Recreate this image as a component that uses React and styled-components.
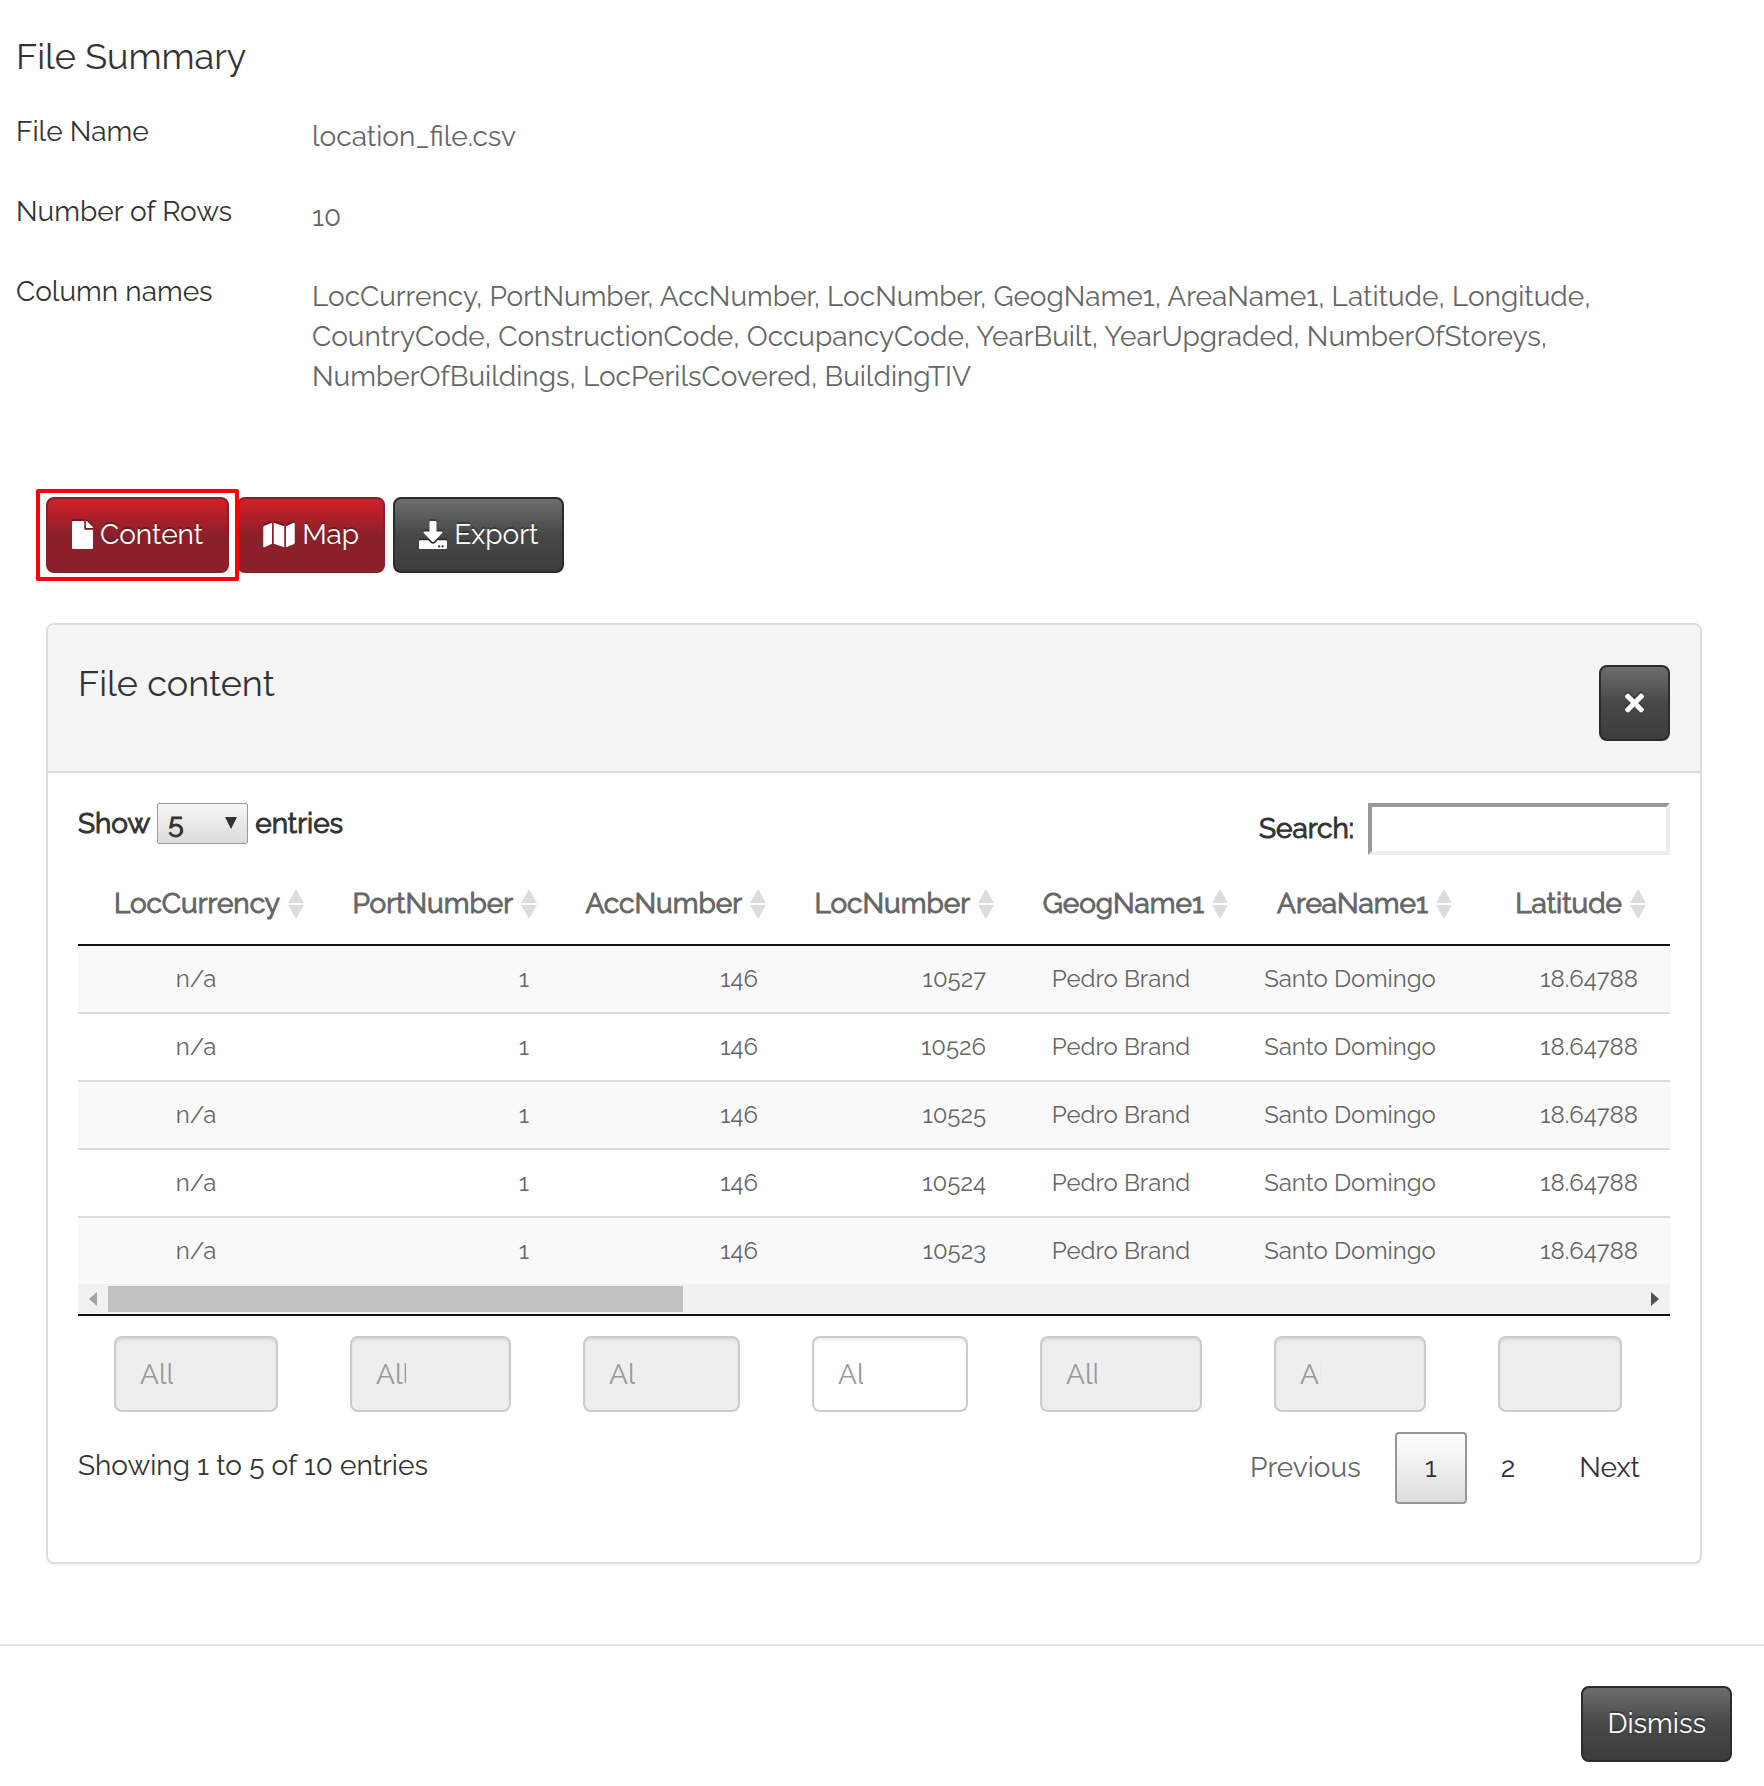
import React from "react";
import styled, { createGlobalStyle, css } from "styled-components";
import { FaDownload, FaFile, FaMap, FaTimes } from "react-icons/fa";

const GlobalStyle = createGlobalStyle`
  *, *::before, *::after { box-sizing: border-box; }
  body {
    margin: 0;
    background: #fff;
    color: #333;
    font-family: Raleway, "Open Sans", sans-serif;
    font-size: 28px;
    line-height: 40px;
  }
  button, input, select { font: inherit; color: inherit; margin: 0; }
`;

const emphasis = css`
  font-weight: 400;
  -webkit-text-stroke: 1px currentColor;
`;

const Summary = styled.section`
  display: flex;
  flex-direction: column;
  gap: 38px;
  padding: 38px 16px 0;
`;

const Heading = styled.h2`
  margin: 0;
  font-size: 36px;
  line-height: 36px;
  font-weight: 400;
`;

const Facts = styled.dl`
  display: grid;
  grid-template-columns: 296px 1fr;
  row-gap: 35px;
  margin: 0;
`;

const FactName = styled.dt``;

const FactValue = styled.dd`
  margin: 0;
  padding-top: 5px;
  color: #666;
`;

const Actions = styled.div`
  display: flex;
  gap: 8px;
  padding: 100px 46px 50px;
`;

const Highlight = styled.div`
  position: relative;
  z-index: 1;

  &::after {
    content: "";
    position: absolute;
    inset: -8px -10px;
    border: 4px solid #f00;
    border-radius: 2px;
    pointer-events: none;
  }
`;

const Button = styled.button`
  display: inline-flex;
  align-items: center;
  justify-content: center;
  gap: 7px;
  height: 76px;
  padding: 0 24px;
  border: 2px solid ${(p) => (p.$primary ? "#892029" : "#2b2c2b")};
  border-radius: 8px;
  background: ${(p) =>
    p.$primary
      ? "linear-gradient(#d5202a, #8a2029 50%, #8a2029)"
      : "linear-gradient(#6d7071, #474948 50%, #3b3c3b)"};
  background-origin: border-box;
  color: #fff;
  text-shadow: 0 -2px 0 rgba(0, 0, 0, 0.3);
  cursor: pointer;

  svg {
    display: block;
    height: 28px;
    width: ${(p) => p.$iconWidth}px;
    filter: drop-shadow(0 -2px 0 rgba(0, 0, 0, 0.3));
  }
`;

const Panel = styled.section`
  margin: 0 62px 80px 46px;
  border: 2px solid #ddd;
  border-radius: 8px;
  box-shadow: 0 2px 2px rgba(0, 0, 0, 0.05);
`;

const PanelHeader = styled.header`
  display: flex;
  justify-content: space-between;
  align-items: flex-start;
  padding: 40px 30px 30px;
  border-bottom: 2px solid #ddd;
  border-radius: 6px 6px 0 0;
  background: #f5f5f5;
`;

const PanelBody = styled.div`
  padding: 30px 30px 58px;
`;

const Toolbar = styled.div`
  display: flex;
  justify-content: space-between;
  align-items: flex-start;
  margin-bottom: 9px;
`;

const LengthLabel = styled.label`
  ${emphasis}
  display: flex;
  align-items: center;
  gap: 7px;
`;

const SelectBox = styled.span`
  position: relative;
  display: flex;

  svg {
    position: absolute;
    right: 11px;
    top: 14px;
    pointer-events: none;
  }
`;

const Select = styled.select`
  appearance: none;
  width: 91px;
  height: 41px;
  padding: 0 10px;
  border: 1px solid #999;
  border-radius: 2px;
  background: linear-gradient(#f6f6f6, #dcdcdc);
  line-height: 36px;
`;

const SearchLabel = styled.label`
  ${emphasis}
  display: flex;
  align-items: center;
  gap: 14px;
  line-height: 36px;
`;

const SearchInput = styled.input`
  width: 302px;
  height: 52px;
  padding: 2px 4px;
  border: 4px solid;
  border-color: #999 #eee #eee #999;
  background: #fff;
  outline: none;
`;

const DataTable = styled.table`
  width: 100%;
  table-layout: fixed;
  border-collapse: separate;
  border-spacing: 0;
  color: #666;
`;

const HeadCell = styled.th`
  ${emphasis}
  padding: 20px 10px 20px 0;
  border-bottom: 2px solid #111;
  white-space: nowrap;

  &:last-child { padding-right: 24px; }
`;

const SortLabel = styled.span`
  display: flex;
  justify-content: flex-end;
  align-items: center;
  gap: 8px;
`;

const Row = styled.tr`
  background: ${(p) => (p.$striped ? "#f9f9f9" : "#fff")};

  &:not(:first-child) td { border-top: 2px solid #ddd; }
`;

const Cell = styled.td`
  padding: 16px 18px;
  font-size: 24px;
  line-height: 34px;
  text-align: ${(p) => (p.$numeric ? "right" : "center")};
  white-space: nowrap;

  &:last-child { padding-right: 32px; }
`;

const ScrollBar = styled.div`
  display: flex;
  height: 32px;
  background: #f1f1f1;
  border-bottom: 2px solid #111;
`;

const ScrollArrow = styled.button`
  display: flex;
  align-items: center;
  justify-content: center;
  flex: 0 0 30px;
  padding: 0;
  border: 0;
  background: none;
  color: ${(p) => (p.disabled ? "#a3a3a3" : "#505050")};
`;

const ScrollTrack = styled.div`
  flex: 1;
  padding: 2px 0;
`;

const ScrollThumb = styled.div`
  width: ${(p) => p.$share}%;
  height: 100%;
  background: #c1c1c1;
`;

const Filters = styled.div`
  display: grid;
  grid-template-columns: 236fr 233fr 229fr 228fr 234fr 224fr 208fr;
  padding: 20px 0;
`;

const FilterCell = styled.div`
  padding: 0 36px;

  &:last-child { padding-right: 48px; }
`;

const FilterInput = styled.input`
  display: block;
  width: 100%;
  height: 76px;
  padding: 0 min(103px, 100% - 28px) 0 24px;
  border: 2px solid #ccc;
  border-radius: 8px;
  background: #fff;
  box-shadow: inset 0 2px 2px rgba(0, 0, 0, 0.075);

  &::placeholder { color: #999; opacity: 1; }
  &:disabled { background: #eee; }
`;

const TableFooter = styled.div`
  display: flex;
  justify-content: space-between;
  align-items: flex-start;
`;

const Info = styled.div`
  padding-top: 14px;
`;

const Pager = styled.nav`
  display: flex;
  gap: 4px;
`;

const PageButton = styled.button`
  height: 72px;
  padding: 0 28px;
  border: 2px solid ${(p) => (p.$current ? "#979797" : "transparent")};
  border-radius: 4px;
  background: ${(p) => (p.$current ? "linear-gradient(#fff, #dcdcdc)" : "none")};
  color: #333;

  &:disabled { color: #666; }
`;

const Footer = styled.footer`
  display: flex;
  justify-content: flex-end;
  padding: 40px 32px 24px;
  border-top: 2px solid #e5e5e5;
`;

const columns = [
  { name: "LocCurrency", width: 236 },
  { name: "PortNumber", width: 233, numeric: true },
  { name: "AccNumber", width: 229, numeric: true },
  { name: "LocNumber", width: 228, numeric: true, filterable: true },
  { name: "GeogName1", width: 234 },
  { name: "AreaName1", width: 224 },
  { name: "Latitude", width: 208, numeric: true },
];

const rows = [10527, 10526, 10525, 10524, 10523].map((loc) => [
  "n/a", "1", "146", String(loc), "Pedro Brand", "Santo Domingo", "18.64788",
]);

const SortIcon = () => (
  <svg width="16" height="30" viewBox="0 0 16 30" fill="#dcdcdc" aria-hidden="true">
    <path d="M8 0 16 14H0ZM0 16H16L8 30Z" />
  </svg>
);

const SelectArrow = () => (
  <svg width="12" height="12" viewBox="0 0 12 12" fill="#333" aria-hidden="true">
    <path d="M0 0H12L6 12Z" />
  </svg>
);

const Triangle = ({ left }) => (
  <svg width="8" height="14" viewBox="0 0 8 14" fill="currentColor" aria-hidden="true">
    <path d={left ? "M8 0V14L0 7Z" : "M0 0V14L8 7Z"} />
  </svg>
);

export default function App() {
  return (
    <>
      <GlobalStyle />
      <main>
        <Summary>
          <Heading>File Summary</Heading>
          <Facts>
            <FactName>File Name</FactName>
            <FactValue>location_file.csv</FactValue>
            <FactName>Number of Rows</FactName>
            <FactValue>10</FactValue>
            <FactName>Column names</FactName>
            <FactValue>
              LocCurrency, PortNumber, AccNumber, LocNumber, GeogName1, AreaName1, Latitude,
              Longitude, CountryCode, ConstructionCode, OccupancyCode, YearBuilt, YearUpgraded,
              NumberOfStoreys, NumberOfBuildings, LocPerilsCovered, BuildingTIV
            </FactValue>
          </Facts>
        </Summary>

        <Actions>
          <Highlight>
            <Button type="button" $primary $iconWidth={21}><FaFile />Content</Button>
          </Highlight>
          <Button type="button" $primary $iconWidth={32}><FaMap />Map</Button>
          <Button type="button" $iconWidth={28}><FaDownload />Export</Button>
        </Actions>

        <Panel>
          <PanelHeader>
            <Heading>File content</Heading>
            <Button type="button" aria-label="Close" $iconWidth={19}><FaTimes /></Button>
          </PanelHeader>
          <PanelBody>
            <Toolbar>
              <LengthLabel>
                Show
                <SelectBox>
                  <Select defaultValue="5">
                    <option>5</option>
                    <option>10</option>
                  </Select>
                  <SelectArrow />
                </SelectBox>
                entries
              </LengthLabel>
              <SearchLabel>
                Search:
                <SearchInput type="search" />
              </SearchLabel>
            </Toolbar>

            <DataTable>
              <colgroup>
                {columns.map((c) => <col key={c.name} width={c.width} />)}
              </colgroup>
              <thead>
                <tr>
                  {columns.map((c) => (
                    <HeadCell key={c.name} scope="col">
                      <SortLabel>{c.name}<SortIcon /></SortLabel>
                    </HeadCell>
                  ))}
                </tr>
              </thead>
              <tbody>
                {rows.map((row, i) => (
                  <Row key={row[3]} $striped={i % 2 === 0}>
                    {row.map((value, j) => (
                      <Cell key={columns[j].name} $numeric={columns[j].numeric}>{value}</Cell>
                    ))}
                  </Row>
                ))}
              </tbody>
            </DataTable>

            <ScrollBar>
              <ScrollArrow type="button" aria-label="Scroll left" disabled><Triangle left /></ScrollArrow>
              <ScrollTrack><ScrollThumb $share={37.5} /></ScrollTrack>
              <ScrollArrow type="button" aria-label="Scroll right"><Triangle /></ScrollArrow>
            </ScrollBar>

            <Filters>
              {columns.map((c) => (
                <FilterCell key={c.name}>
                  <FilterInput
                    type="text"
                    placeholder="All"
                    aria-label={c.name}
                    disabled={!c.filterable}
                  />
                </FilterCell>
              ))}
            </Filters>

            <TableFooter>
              <Info>Showing 1 to 5 of 10 entries</Info>
              <Pager>
                <PageButton type="button" disabled>Previous</PageButton>
                <PageButton type="button" $current>1</PageButton>
                <PageButton type="button">2</PageButton>
                <PageButton type="button">Next</PageButton>
              </Pager>
            </TableFooter>
          </PanelBody>
        </Panel>

        <Footer>
          <Button type="button">Dismiss</Button>
        </Footer>
      </main>
    </>
  );
}
